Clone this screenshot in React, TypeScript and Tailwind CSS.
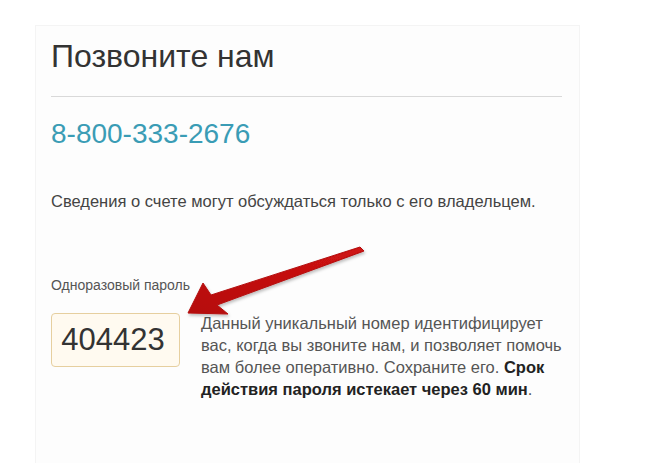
import React from 'react';

const Arrow = () => (
    <svg className="pointer-events-none absolute left-0 top-0" width="650" height="463" viewBox="0 0 650 463">
        <defs>
            <linearGradient id="arrowFill" x1="0" y1="1" x2="1" y2="0">
                <stop offset="0" stopColor="#b50c0c" />
                <stop offset="1" stopColor="#cf1313" />
            </linearGradient>
            <filter id="arrowShadow" x="-10%" y="-30%" width="120%" height="160%">
                <feDropShadow dx="1" dy="2" stdDeviation="1.5" floodColor="#000" floodOpacity="0.25" />
            </filter>
        </defs>
        <polygon
            points="188,313 203,283 211,295 360,247 364,251 217,305 228,314"
            fill="url(#arrowFill)"
            stroke="#b30c0c"
            strokeWidth="1"
            strokeLinejoin="round"
            filter="url(#arrowShadow)"
        />
    </svg>
);

export default function App() {
    return (
        <div className="relative h-[463px] w-[650px] overflow-hidden bg-white font-['Liberation_Sans',Arial,sans-serif]">
            <div className="ml-[35px] mt-[25px] h-[438px] w-[545px] border-l border-r border-t border-[#f4f4f4] bg-[#fdfdfd] pl-[15px] pr-[17px] pt-[10px]">
                <h1 className="text-[32px] leading-[40px] font-normal text-[#333]">Позвоните нам</h1>
                <div className="mt-[20px] h-px bg-[#d9d9d9]" />
                <div className="mt-[20px] text-[28px] leading-[34px] text-[#3a9cb5]">8-800-333-2676</div>
                <p className="mt-[40px] text-[16.5px] leading-[20px] text-[#444]">
                    Сведения о счете могут обсуждаться только с его владельцем.
                </p>
                <div className="mt-[65px] text-[14px] leading-[18px] text-[#555]">Одноразовый пароль</div>
                <div className="mt-[19px] flex items-start gap-[21px]">
                    <div className="flex h-[54px] w-[129px] shrink-0 items-center justify-center rounded-[4px] border border-[#e6cf9f] bg-[#fffaf0] pr-[5px] text-[31px] text-[#333]">
                        404423
                    </div>
                    <p className="-mt-px whitespace-nowrap text-[16.5px] leading-[22px] text-[#555]">
                        Данный уникальный номер идентифицирует
                        <br />
                        вас, когда вы звоните нам, и позволяет помочь
                        <br />
                        вам более оперативно. Сохраните его.{' '}
                        <b className="font-bold text-[#222]">Срок</b>
                        <br />
                        <b className="font-bold text-[#222]">действия пароля истекает через 60 мин</b>.
                    </p>
                </div>
            </div>
            <Arrow />
        </div>
    );
}
